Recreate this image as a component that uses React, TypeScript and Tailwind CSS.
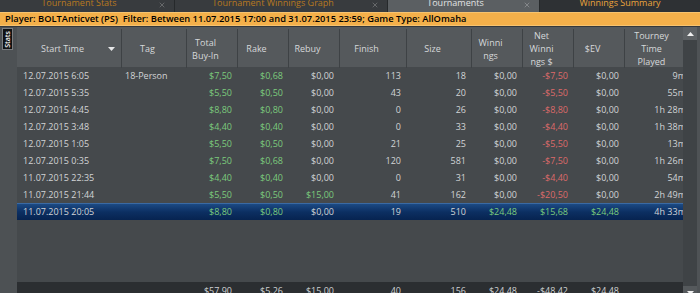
import { X } from 'lucide-react';

type Row = string[];

const rows: Row[] = [
  ['12.07.2015 6:05', '18-Person', '$7,50', '$0,68', '$0,00', '113', '18', '$0,00', '-$7,50', '$0,00', '9m'],
  ['12.07.2015 5:35', '', '$5,50', '$0,50', '$0,00', '43', '20', '$0,00', '-$5,50', '$0,00', '55m'],
  ['12.07.2015 4:45', '', '$8,80', '$0,80', '$0,00', '0', '26', '$0,00', '-$8,80', '$0,00', '1h 28m'],
  ['12.07.2015 3:48', '', '$4,40', '$0,40', '$0,00', '0', '33', '$0,00', '-$4,40', '$0,00', '1h 38m'],
  ['12.07.2015 1:05', '', '$5,50', '$0,50', '$0,00', '21', '25', '$0,00', '-$5,50', '$0,00', '13m'],
  ['12.07.2015 0:35', '', '$7,50', '$0,68', '$0,00', '120', '581', '$0,00', '-$7,50', '$0,00', '1h 26m'],
  ['11.07.2015 22:35', '', '$4,40', '$0,40', '$0,00', '0', '31', '$0,00', '-$4,40', '$0,00', '54m'],
  ['11.07.2015 21:44', '', '$5,50', '$0,50', '$15,00', '41', '162', '$0,00', '-$20,50', '$0,00', '2h 49m'],
  ['11.07.2015 20:05', '', '$8,80', '$0,80', '$0,00', '19', '510', '$24,48', '$15,68', '$24,48', '4h 33m'],
];

const totals: Row = ['', '', '$57,90', '$5,26', '$15,00', '40', '156', '$24,48', '-$48,42', '$24,48', ''];

const headers = ['Start Time', 'Tag', 'Total\nBuy-In', 'Rake', 'Rebuy', 'Finish', 'Size', 'Winni\nngs', 'Net\nWinni\nngs $', '$EV', 'Tourney\nTime\nPlayed'];

const cols = 'grid grid-cols-[105px_65px_51px_51px_51px_67px_65px_51px_51px_51px_67px] w-[675px]';

// money columns: green when not zero, red when negative
const cellColor = (value: string, col: number) => {
  if (col < 2 || col === 5 || col === 6 || col === 10) return 'text-[#d2d4d6]';
  if (value.startsWith('-')) return 'text-[#de6a6a]';
  if (col === 2 || col === 3) return 'text-[#7ccb7c]';
  if (value === '$0,00') return 'text-[#d2d4d6]';
  return 'text-[#7ccb7c]';
};

const cellAlign = (col: number) => {
  if (col === 0) return 'justify-start pl-[6px]';
  if (col === 1) return 'justify-start pl-[3px]';
  return 'justify-end pr-[6px]';
};

function Tab({ label, active, closable, className }: { label: string; active?: boolean; closable?: boolean; className: string }) {
  return (
    <div className={`h-[12px] flex items-end overflow-hidden border-r border-[#26292b] ${className}`}>
      <span className="flex-1 text-center leading-[16px] mb-[1px] text-[9px] whitespace-nowrap">{label}</span>
      {closable && <X size={8} className={`mb-[3px] mr-[8px] ${active ? 'text-[#9a9c9e]' : 'text-[#7d7f81]'}`} />}
    </div>
  );
}

export default function App() {
  return (
    <div className="w-[700px] h-[293px] overflow-hidden bg-[#45494c] font-['Open_Sans',sans-serif] flex flex-col">
      <div className="flex h-[12px] shrink-0 bg-[#2e3134]">
        <Tab label="Tournament Stats" closable className="w-[175px] bg-[#383b3e] text-[#b7791f]" />
        <Tab label="Tournament Winnings Graph" closable className="w-[213px] bg-[#383b3e] text-[#b7791f]" />
        <Tab label="Tournaments" active closable className="w-[152px] bg-[#5b5f62] text-[#e2e3e4]" />
        <Tab label="Winnings Summary" className="flex-1 bg-[#2e3134] text-[#eaa43c] border-r-0" />
      </div>

      <div className="h-[14px] shrink-0 bg-[#f4b04a] border-t border-[#f7c36f] border-b border-[#a8772e] flex items-center pl-[5px] text-[9.3px] font-semibold text-black whitespace-nowrap">
        Player: BOLTAnticvet (PS)&nbsp;&nbsp;Filter: Between 11.07.2015 17:00 and 31.07.2015 23:59; Game Type: AllOmaha
      </div>

      <div className="h-[1px] shrink-0 bg-[#35383b]" />

      <div className="flex h-[272px] shrink-0">
        <div className="w-[17px] shrink-0 bg-[#4d5154] pl-[2px] pt-[1px]">
          <div className="w-[11px] h-[22px] bg-[#111213] border border-[#7a7d80] flex items-center justify-center">
            <span className="[writing-mode:vertical-rl] rotate-180 text-[7px] leading-[9px] font-semibold text-white">Stats</span>
          </div>
        </div>

        <div className="w-[666px] shrink-0 overflow-hidden flex flex-col">
          <div className={`${cols} h-[40px] bg-[#55595c] py-[2px] shrink-0`}>
            {headers.map((h, i) => (
              <div key={i} className="relative flex items-center justify-center pr-[13px] border-r border-[#3e4245] text-center whitespace-pre-line text-[9px] leading-[13px] text-[#d6d8da]">
                {h}
                {i === 0 && (
                  <svg width="7" height="4" viewBox="0 0 7 4" className="absolute right-[6px] top-[18px]">
                    <polygon points="0,0 7,0 3.5,4" fill="#e6e7e8" />
                  </svg>
                )}
              </div>
            ))}
          </div>

          {rows.map((r, ri) => {
            const selected = ri === rows.length - 1;
            return (
              <div
                key={ri}
                className={`${cols} h-[17px] shrink-0 ${selected ? 'bg-gradient-to-b from-[#1c4a84] via-[#0c2f62] to-[#072350] border-t border-[#3b6aa3]' : ''}`}
              >
                {r.map((v, ci) => (
                  <div key={ci} className={`flex items-center whitespace-nowrap text-[9px] ${cellAlign(ci)} ${cellColor(v, ci)}`}>
                    {v}
                  </div>
                ))}
              </div>
            );
          })}

          <div className="h-[62px] shrink-0" />

          <div className={`${cols} h-[17px] shrink-0 bg-[#2b2e31]`}>
            {totals.map((v, ci) => (
              <div key={ci} className={`flex items-center whitespace-nowrap text-[9px] text-[#cfd1d3] ${cellAlign(ci)}`}>
                {v}
              </div>
            ))}
          </div>
        </div>

        <div className="w-[17px] shrink-0 bg-[#4f5356] flex">
          <div className="w-[14px] flex flex-col">
            <div className="h-[13px] bg-[#5d6164] flex items-center justify-center">
              <svg width="7" height="4" viewBox="0 0 7 4">
                <polygon points="3.5,0 7,4 0,4" fill="#f0f0f0" />
              </svg>
            </div>
            <div className="flex-1 bg-[#3f4346]" />
            <div className="h-[13px] bg-[#55595c] flex items-center justify-center">
              <svg width="7" height="4" viewBox="0 0 7 4">
                <polygon points="0,0 7,0 3.5,4" fill="#f0f0f0" />
              </svg>
            </div>
          </div>
        </div>
      </div>
    </div>
  );
}
